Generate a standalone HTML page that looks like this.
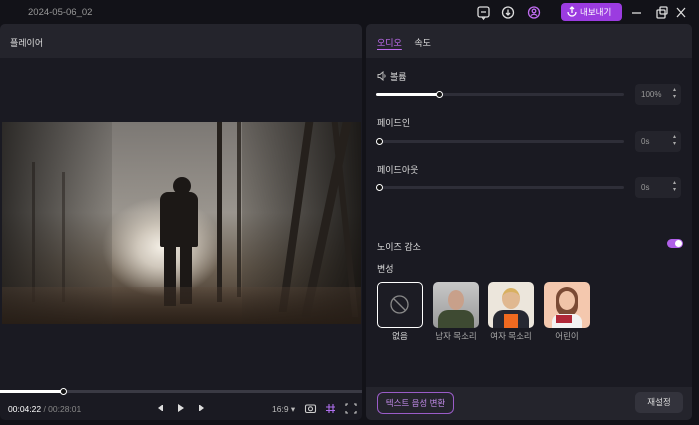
<!DOCTYPE html>
<html><head><meta charset="utf-8"><style>
*{margin:0;padding:0;box-sizing:border-box}
body{width:699px;height:425px;background:#121218;font-family:"Liberation Sans","Noto Sans CJK KR",sans-serif;color:#ddd;font-size:9px;position:relative;overflow:hidden}
.a{position:absolute}
.panel{background:#1a1a22;border-radius:5px;overflow:hidden}
.hdr{background:#24242c;height:34px}
.track{height:3px;background:#2e2e38;border-radius:2px}
.knob{width:7px;height:7px;border-radius:50%;background:#111;border:1.5px solid #fff}
.box{background:#24242c;border-radius:4px;width:46px;height:21px;color:#999;font-size:8px;line-height:21px;padding-left:6px}
.box:after{content:"▴\A▾";white-space:pre;position:absolute;right:5px;top:3px;font-size:6px;line-height:7px;color:#aaa}
.lbl{color:#ddd;font-size:9px}
.th{width:46px;height:46px;border-radius:5px;overflow:hidden}
.cap{width:46px;text-align:center;color:#aaa;font-size:8.5px}
.tr{position:absolute;background:#25201c}
</style></head><body>
<div class="a" style="left:28px;top:7px;color:#999;font-size:9.5px">2024-05-06_02</div>
<svg class="a" style="left:476px;top:5px" width="215" height="16" fill="none" stroke="#ddd" stroke-width="1.3">
<rect x="2" y="2" width="11" height="10" rx="2"/><path d="M5 7h5M6 12l1.5 2 1.5-2"/>
<circle cx="32" cy="7.5" r="5.5"/><path d="M32 4.5v5M30 8l2 2 2-2"/>
<circle cx="58" cy="7.5" r="5.5" stroke="#c06cf0"/><circle cx="58" cy="6" r="1.8" stroke="#c06cf0"/><path d="M55 10.5q3-2.5 6 0" stroke="#c06cf0"/>
<path d="M156 8h9"/><rect x="181" y="5" width="8" height="8" rx="1"/><rect x="184" y="2" width="7" height="7" rx="1"/>
<path d="M201 3l8 9M209 3l-8 9"/></svg>
<div class="a" style="left:561px;top:3px;width:61px;height:18px;background:#9b3ce0;border-radius:4px;color:#fff;font-size:8.5px;line-height:18px;padding-left:19px">내보내기</div>
<svg class="a" style="left:566px;top:6px" width="12" height="12" fill="none" stroke="#fff" stroke-width="1.3"><path d="M6 1v6M4 3l2-2 2 2M2 6a4 4 0 1 0 8 0"/></svg>

<div class="a panel" style="left:0;top:24px;width:362px;height:396px">
 <div class="hdr"><div style="padding:12px 0 0 10px;font-size:9px">플레이어</div></div>
 <div class="a" style="left:2px;top:98px;width:359px;height:202px;overflow:hidden;background:
 radial-gradient(ellipse 60px 50px at 160px 125px,#f4efe6 0%,#d0c8bc 40%,transparent 100%),
 linear-gradient(180deg,#7c7874 0%,#9a958e 45%,#6e6254 72%,#3a2e24 100%)">
  <div class="a" style="left:0;top:0;width:110px;height:202px;background:linear-gradient(90deg,rgba(30,28,26,.85),rgba(60,58,54,.2))"></div>
  <div class="a" style="left:240px;top:0;width:119px;height:202px;background:linear-gradient(90deg,rgba(50,46,40,.3),rgba(20,18,16,.92))"></div>
  <div class="tr" style="left:30px;top:40px;width:3px;height:140px;opacity:.6"></div>
  <div class="tr" style="left:60px;top:50px;width:3px;height:130px;opacity:.5"></div>
  <div class="tr" style="left:215px;top:0;width:5px;height:180px"></div>
  <div class="tr" style="left:235px;top:0;width:4px;height:175px;opacity:.8"></div>
  <div class="tr" style="left:290px;top:0;width:8px;height:190px;transform:skewX(-8deg)"></div>
  <div class="tr" style="left:320px;top:0;width:9px;height:195px;transform:skewX(-12deg)"></div>
  <div class="tr" style="left:340px;top:0;width:6px;height:195px;transform:skewX(6deg)"></div>
  <div class="a" style="left:171px;top:55px;width:18px;height:18px;border-radius:50%;background:#1c1816"></div>
  <div class="a" style="left:158px;top:70px;width:38px;height:55px;border-radius:8px 8px 2px 2px;background:#1c1816"></div>
  <div class="a" style="left:162px;top:122px;width:12px;height:62px;background:#1c1816"></div>
  <div class="a" style="left:178px;top:122px;width:12px;height:60px;background:#1c1816"></div>
  <div class="a" style="left:0;top:165px;width:359px;height:37px;background:linear-gradient(180deg,rgba(90,70,55,.3),rgba(40,30,22,.85))"></div>
 </div>
 <div class="a" style="left:0;top:366px;width:362px;height:3px;background:#3a3a44"></div>
 <div class="a" style="left:0;top:366px;width:64px;height:3px;background:#fff"></div>
 <div class="a knob" style="left:60px;top:364px"></div>
 <div class="a" style="left:8px;top:380px;font-size:8.5px;color:#fff">00:04:22 <span style="color:#888">/ 00:28:01</span></div>
 <svg class="a" style="left:156px;top:378px" width="50" height="12" fill="#ddd"><path d="M2 6l4-3v6z"/><rect x="6" y="3" width="1" height="6"/><path d="M22 2l6 4-6 4z"/><path d="M48 6l-4-3v6z"/><rect x="43" y="3" width="1" height="6"/></svg>
 <div class="a" style="left:272px;top:380px;font-size:8.5px;color:#bbb">16:9 ▾</div>
 <svg class="a" style="left:304px;top:378px" width="54" height="12" fill="none" stroke="#ccc" stroke-width="1.1"><rect x="1.5" y="3" width="10" height="7.5" rx="1.5"/><circle cx="6.5" cy="6.8" r="2"/><path d="M25 2v9M29 2v9M22 5h9M22 8.5h9" stroke="#b070f0"/><path d="M42 4V2h2M50 2h2v2M52 9v2h-2M44 11h-2V9"/></svg>
</div>

<div class="a panel" style="left:366px;top:24px;width:326px;height:396px">
 <div class="hdr"><div style="padding:12px 0 0 11px;font-size:9px"><span style="color:#c06cf0;text-decoration:underline;text-underline-offset:3px">오디오</span>&nbsp;&nbsp;&nbsp;&nbsp;&nbsp;속도</div></div>
 <div class="a" style="left:0;top:363px;width:326px;height:33px;background:#24242c"></div>
 <svg class="a" style="left:11px;top:47px" width="10" height="10" fill="none" stroke="#bbb" stroke-width="1"><path d="M1 3.5h2l3-2.5v8l-3-2.5H1z"/><path d="M7.5 3.5q1.2 1.5 0 3"/></svg>
 <div class="a lbl" style="left:24px;top:46px">볼륨</div>
 <div class="a track" style="left:10px;top:69px;width:248px"></div>
 <div class="a" style="left:10px;top:69px;width:64px;height:3px;background:#fff;border-radius:2px"></div>
 <div class="a knob" style="left:70px;top:67px"></div>
 <div class="a box" style="left:269px;top:60px">100%</div>
 <div class="a lbl" style="left:11px;top:92px">페이드인</div>
 <div class="a track" style="left:10px;top:116px;width:248px"></div>
 <div class="a knob" style="left:10px;top:114px"></div>
 <div class="a box" style="left:269px;top:107px">0s</div>
 <div class="a lbl" style="left:11px;top:139px">페이드아웃</div>
 <div class="a track" style="left:10px;top:162px;width:248px"></div>
 <div class="a knob" style="left:10px;top:160px"></div>
 <div class="a box" style="left:269px;top:153px">0s</div>
 <div class="a lbl" style="left:11px;top:216px">노이즈 감소</div>
 <div class="a" style="left:301px;top:215px;width:16px;height:9px;border-radius:5px;background:#b060e8"><div style="position:absolute;right:1px;top:1px;width:7px;height:7px;border-radius:50%;background:#fff"></div></div>
 <div class="a lbl" style="left:11px;top:238px">변성</div>
 <div class="a th" style="left:11px;top:258px;border:1.5px solid #fff;background:#1c1c24"><svg width="43" height="43" fill="none" stroke="#888" stroke-width="1.3"><circle cx="21.5" cy="21.5" r="8.5"/><path d="M15.5 15.5l12 12"/></svg></div>
 <div class="a th" style="left:67px;top:258px;background:linear-gradient(#c8c8c8,#9a9a9a)"><div class="a" style="left:15px;top:8px;width:16px;height:20px;border-radius:50%;background:#c8a08a"></div><div class="a" style="left:5px;top:28px;width:36px;height:20px;border-radius:10px 10px 0 0;background:#3e4a32"></div></div>
 <div class="a th" style="left:122px;top:258px;background:#ece6dc"><div class="a" style="left:14px;top:6px;width:18px;height:21px;border-radius:50%;background:#e0b890;border-top:4px solid #d8b060"></div><div class="a" style="left:5px;top:28px;width:36px;height:20px;border-radius:10px 10px 0 0;background:#262832"></div><div class="a" style="left:16px;top:32px;width:14px;height:14px;background:#f06a20"></div></div>
 <div class="a th" style="left:178px;top:258px;background:#f4c8ae"><div class="a" style="left:12px;top:5px;width:22px;height:30px;border-radius:11px;background:#7a4a34"></div><div class="a" style="left:15px;top:9px;width:16px;height:19px;border-radius:50%;background:#f0c4a8"></div><div class="a" style="left:8px;top:32px;width:30px;height:16px;background:#f2f2f2;border-radius:8px 8px 0 0"></div><div class="a" style="left:12px;top:33px;width:16px;height:8px;background:#b02838"></div></div>
 <div class="a cap" style="left:11px;top:306px;color:#ddd">없음</div>
 <div class="a cap" style="left:64px;top:306px;width:52px">남자 목소리</div>
 <div class="a cap" style="left:119px;top:306px;width:52px">여자 목소리</div>
 <div class="a cap" style="left:178px;top:306px">어린이</div>
 <div class="a" style="left:11px;top:368px;width:77px;height:22px;border:1px solid #9a5cc8;border-radius:6px;color:#c08ae8;font-size:8.5px;text-align:center;line-height:20px">텍스트 음성 변환</div>
 <div class="a" style="left:269px;top:368px;width:48px;height:21px;background:#33333c;border-radius:5px;color:#ddd;font-size:8.5px;text-align:center;line-height:21px">재설정</div>
</div>
</body></html>
